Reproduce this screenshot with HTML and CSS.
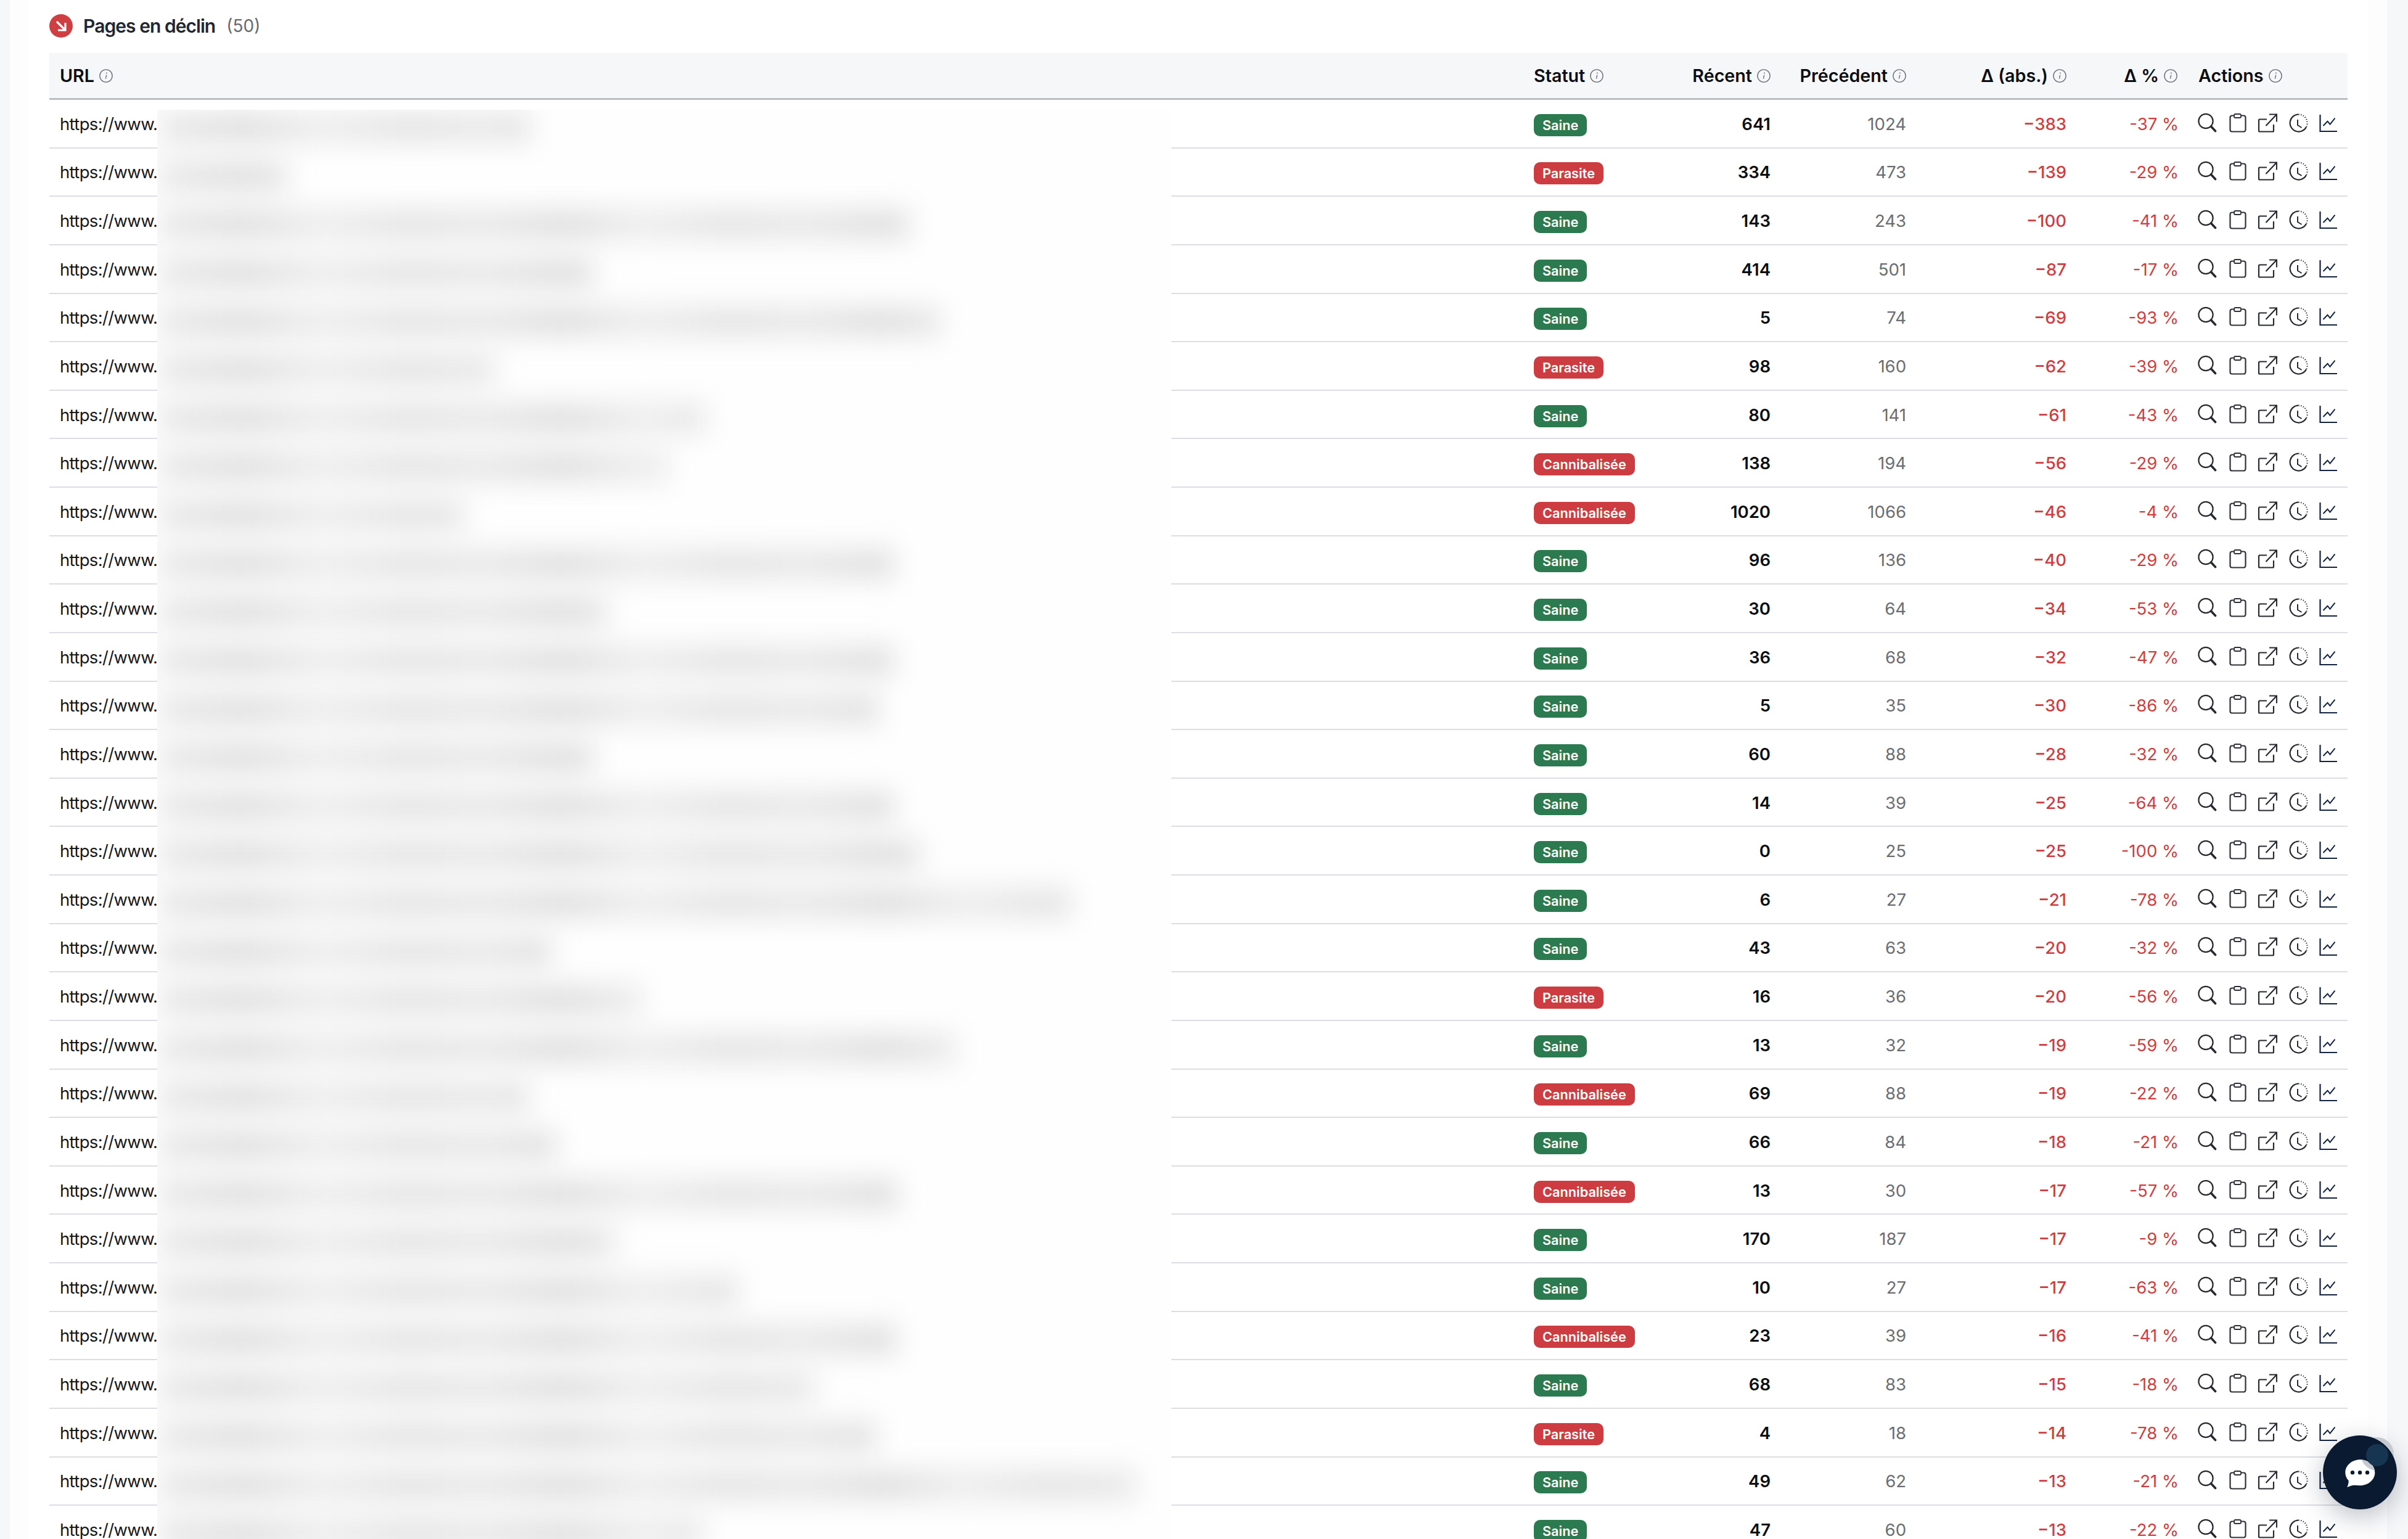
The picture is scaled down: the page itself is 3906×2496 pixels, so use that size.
FILE: index.html
```html
<!DOCTYPE html>
<html lang="fr">
<head>
<meta charset="utf-8">
<title>Pages en déclin</title>
<link rel="stylesheet" href="styles.css">
</head>
<body>
<svg class="defs" width="0" height="0" aria-hidden="true">
  <symbol id="i-info" viewBox="0 0 22 22"><circle cx="11" cy="11" r="10.1" fill="none" stroke="#6b6f76" stroke-width="1.4"/><path d="M11.7 9.6 10.4 15.6" fill="none" stroke="#6b6f76" stroke-width="1.4"/><circle cx="11.9" cy="6.6" r="1" fill="#6b6f76"/></symbol>
  <symbol id="i-search" viewBox="0 0 32 32"><circle cx="14" cy="13.5" r="11.6" fill="none" stroke="#262a2f" stroke-width="2.200"/><path d="M22.5 22 29.5 29.5" fill="none" stroke="#262a2f" stroke-width="3.600" stroke-linecap="round"/></symbol>
  <symbol id="i-clip" viewBox="0 0 32 32"><path d="M10.5 4.5H7.5a3 3 0 0 0-3 3V27.5a3 3 0 0 0 3 3H26.5a3 3 0 0 0 3-3V7.5a3 3 0 0 0-3-3H22.5" fill="none" stroke="#2e3238" stroke-width="2.200"/><rect x="11" y="2" width="11" height="6" rx="2" fill="none" stroke="#2e3238" stroke-width="1.900"/></symbol>
  <symbol id="i-ext" viewBox="0 0 32 32"><path d="M15 10.500H3.500a1.500 1.500 0 0 0-1.500 1.500V29a1.500 1.500 0 0 0 1.500 1.500H24.500a1.500 1.500 0 0 0 1.500-1.500V19" fill="none" stroke="#262a2f" stroke-width="2.200"/><path d="M13.500 21 30.500 3M19 2.500H31V14.500" fill="none" stroke="#262a2f" stroke-width="2.200"/></symbol>
  <symbol id="i-clock" viewBox="0 0 32 32"><path d="M16.500 2.500A14 14 0 1 0 29 23" fill="none" stroke="#262a2f" stroke-width="2.200"/><path d="M16.500 2.500A14 14 0 0 1 29 23" fill="none" stroke="#262a2f" stroke-width="2.200" stroke-dasharray="1.300 2.500"/><path d="M15 11V20L21.500 24" fill="none" stroke="#262a2f" stroke-width="2"/></symbol>
  <symbol id="i-chart" viewBox="0 0 32 32"><path d="M2.500 3V30H30" fill="none" stroke="#14233f" stroke-width="2.200"/><path d="M7.500 21 14.500 13.700 18.500 18.700 26.500 8.700" fill="none" stroke="#14233f" stroke-width="2"/></symbol>
</svg>
<main class="shell">
  <section class="card">
    <h2 class="title">
      <span class="title-icon"><svg viewBox="0 0 38 38" width="38" height="38"><path d="M12 12 24.500 24.500M14 26H26V14" fill="none" stroke="#fff" stroke-width="3.200"/></svg></span>
      <span class="title-text">Pages en déclin</span>
      <span class="title-count">(50)</span>
    </h2>
    <div class="table">
      <div class="row head">
        <div class="cell">URL <svg class="info"><use href="#i-info"/></svg></div>
        <div class="cell">Statut <svg class="info"><use href="#i-info"/></svg></div>
        <div class="cell num">Récent <svg class="info"><use href="#i-info"/></svg></div>
        <div class="cell num">Précédent <svg class="info"><use href="#i-info"/></svg></div>
        <div class="cell num">Δ (abs.) <svg class="info"><use href="#i-info"/></svg></div>
        <div class="cell num">Δ % <svg class="info"><use href="#i-info"/></svg></div>
        <div class="cell">Actions <svg class="info"><use href="#i-info"/></svg></div>
      </div>
      <div class="rows" id="rows"></div>
      <div class="mask" aria-hidden="true"><div class="mask-inner" id="mask"></div></div>
    </div>
  </section>
</main>
<button class="chat" type="button" aria-label="Chat">
  <svg viewBox="0 0 120 120" width="120" height="120">
    <defs><clipPath id="bubble-clip"><path d="M60.300 39.300C73.500 39.300 84.300 48.700 84.300 60.300S73.500 81.300 60.300 81.300C55 81.300 50 80 46 81.500L39.300 84C41 80 42 76 41.500 73C38 69.500 36.300 65 36.300 60.300C36.300 48.700 47.100 39.300 60.300 39.300Z"/></clipPath></defs>
    <circle cx="88" cy="30" r="27" fill="#c6c9d0"/>
    <circle cx="60" cy="60" r="60" fill="#0a1a30"/>
    <path d="M60.300 39.300C73.500 39.300 84.300 48.700 84.300 60.300S73.500 81.300 60.300 81.300C55 81.300 50 80 46 81.500L39.300 84C41 80 42 76 41.500 73C38 69.500 36.300 65 36.300 60.300C36.300 48.700 47.100 39.300 60.300 39.300Z" fill="#fff"/>
    <circle cx="88" cy="30" r="27" fill="#c6c9d0" clip-path="url(#bubble-clip)"/>
    <circle cx="88" cy="32" r="18" fill="#163550"/>
    <circle cx="48" cy="60.300" r="3.200" fill="#0a1a30"/><circle cx="60" cy="60.300" r="3.200" fill="#0a1a30"/><circle cx="72" cy="60.300" r="3.200" fill="#0a1a30"/>
  </svg>
</button>
<script src="rows.js"></script>
</body>
</html>
```

FILE: rows.js
```js
var DATA = [
  ["Saine",641,1024,383,37,591],["Parasite",334,473,139,29,198],["Saine",143,243,100,41,1207],
  ["Saine",414,501,87,17,696],["Saine",5,74,69,93,1257],["Parasite",98,160,62,39,534],
  ["Saine",80,141,61,43,875],["Cannibalisée",138,194,56,29,813],["Cannibalisée",1020,1066,46,4,484],
  ["Saine",96,136,40,29,1182],["Saine",30,64,34,53,716],["Saine",36,68,32,47,1182],
  ["Saine",5,35,30,86,1157],["Saine",60,88,28,32,696],["Saine",14,39,25,64,1182],
  ["Saine",0,25,25,100,1224],["Saine",6,27,21,78,1468],["Saine",43,63,20,32,626],
  ["Parasite",16,36,20,56,771],["Saine",13,32,19,59,1281],["Cannibalisée",69,88,19,22,589],
  ["Saine",66,84,18,21,634],["Cannibalisée",13,30,17,57,1189],["Saine",170,187,17,9,728],
  ["Saine",10,27,17,63,928],["Cannibalisée",23,39,16,41,1187],["Saine",68,83,15,18,1052],
  ["Parasite",4,18,14,78,1152],["Saine",49,62,13,21,1573],["Saine",47,60,13,22,870]
];
var ICONS = ["search","clip","ext","clock","chart"];
var actions = ICONS.map(function (n) { return '<svg class="act"><use href="#i-' + n + '"/></svg>'; }).join("");
document.getElementById("rows").innerHTML = DATA.map(function (d) {
  var cls = d[0] === "Saine" ? "ok" : "bad";
  return '<div class="row">' +
    '<div class="cell url">https://www.</div>' +
    '<div class="cell"><span class="badge ' + cls + '">' + d[0] + '</span></div>' +
    '<div class="cell num strong">' + d[1] + '</div>' +
    '<div class="cell num muted">' + d[2] + '</div>' +
    '<div class="cell num delta">−' + d[3] + '</div>' +
    '<div class="cell num pct">-' + d[4] + ' %</div>' +
    '<div class="cell actions">' + actions + '</div></div>';
}).join("");
document.getElementById("mask").innerHTML = DATA.map(function (d) {
  return '<div class="slot"><span class="blob" style="width:' + d[5] + 'px"></span></div>';
}).join("");
```

FILE: styles.css
```css
html, body { margin: 0; height: 2496px; overflow: hidden; background: #f6f7f9; }
body { font-family: Inter, "Liberation Sans", sans-serif; color: #0b0d10; }
.defs { position: absolute; }
.shell { margin: 0 34px 0 16px; padding: 0 32px; background: #fdfdfe; height: 2496px; }
.card { background: #fff; padding: 0 32px; height: 2496px; }

.title { display: flex; align-items: center; margin: 0; height: 86px; padding-bottom: 2px; box-sizing: border-box; font-weight: 400; }
.title-icon { width: 38px; height: 38px; border-radius: 50%; background: #cf3f41; display: flex; margin-right: 17px; }
.title-text { font-size: 30px; font-weight: 600; letter-spacing: -0.950px; color: #1f2733; margin-right: 18px; }
.title-count { font-size: 28px; color: #666a70; }

.table { position: relative; }
.row {
  display: grid;
  grid-template-columns: 2391px 229px 189px 220px 260px 180px 259px;
  height: 78.64px;
  box-sizing: border-box;
  border-bottom: 2px solid #dcdee3;
  align-items: center;
  font-size: 27.5px;
}
.row.head { height: 76px; background: #f6f7f9; border-bottom: 3px solid #bcbec2; font-weight: 600; font-size: 28.700px; }
.cell { padding: 1px 17px 0; white-space: nowrap; display: flex; align-items: center; gap: 8px; }
.head .cell { padding-top: 0; }
.num { justify-content: flex-end; }
.strong { font-weight: 600; color: #0b0d10; }
.muted { color: #6a6d72; }
.delta { color: #d13c3f; font-weight: 550; }
.pct { color: #d13c3f; padding-right: 15px; }
.url { color: #14171b; letter-spacing: -0.650px; }
.info { width: 22px; height: 22px; flex: none; }

.badge { display: inline-flex; align-items: center; height: 36px; margin-top: 4px; padding: 0 14px; border-radius: 10px; color: #fff; font-size: 21.700px; font-weight: 600; }
.badge.ok { background: #2c7a50; }
.badge.bad { background: #cc3c41; }

.actions { gap: 17.200px; padding-left: 15px; padding-top: 0; }
.act { width: 32px; height: 32px; flex: none; margin-top: -3px; }

.mask { position: absolute; left: 175px; top: 92px; width: 1645px; height: 2400px; background: #fefefe; overflow: hidden; }
.mask-inner { filter: blur(20px); padding-left: 8px; }
.slot { height: 78.64px; box-sizing: border-box; padding-top: 9px; }
.blob { display: block; height: 40px; background: repeating-linear-gradient(90deg, #e9e9e9 0, #dfdfdf 130px, #eeeeee 260px, #e4e4e4 400px, #e9e9e9 520px); box-shadow: 0 0 0 10px #f2f2f2; }

.chat { position: fixed; left: 3768px; top: 2328px; width: 120px; height: 120px; padding: 0; border: 0; border-radius: 50%; background: none; box-shadow: 0 12px 44px rgba(10, 26, 48, .28); }
.chat svg { display: block; overflow: visible; }
```
